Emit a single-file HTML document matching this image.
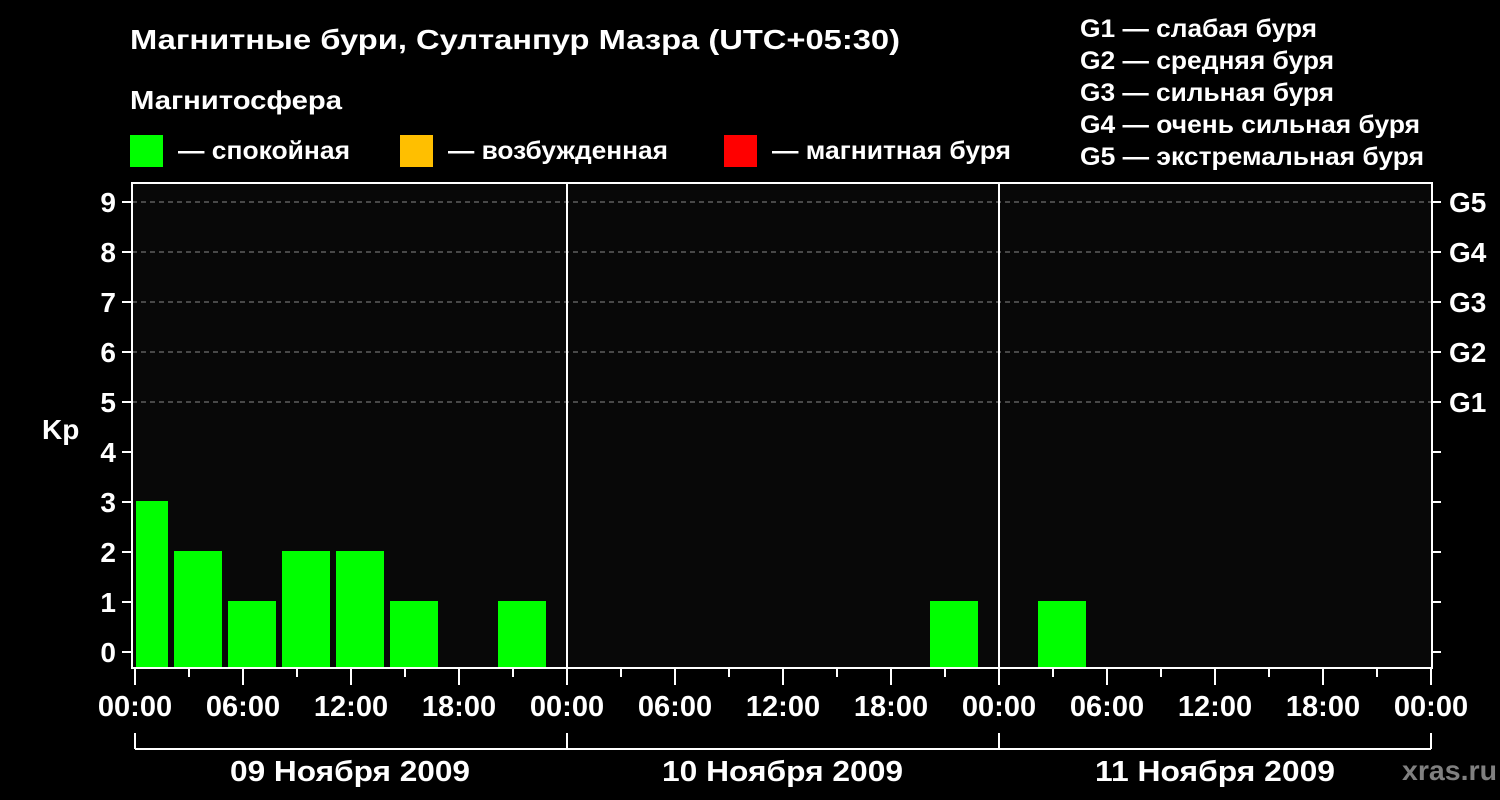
<!DOCTYPE html>
<html><head><meta charset="utf-8"><style>
html,body{margin:0;padding:0;background:#000;width:1500px;height:800px;overflow:hidden}
svg{display:block}
text{font-family:"Liberation Sans",Arial,sans-serif;font-weight:bold;fill:#fff}
</style></head><body>
<svg width="1500" height="800" viewBox="0 0 1500 800" xmlns="http://www.w3.org/2000/svg">
<rect width="1500" height="800" fill="#000"/>
<rect x="132" y="183" width="1300" height="485" fill="#080808"/>
<text x="130" y="49" font-size="28" textLength="770" lengthAdjust="spacingAndGlyphs">Магнитные бури, Султанпур Мазра (UTC+05:30)</text>
<text x="130" y="109" font-size="26" textLength="212" lengthAdjust="spacingAndGlyphs">Магнитосфера</text>
<rect x="130" y="135" width="33" height="32" fill="#00ff00"/>
<text x="178" y="159" font-size="25" textLength="172" lengthAdjust="spacingAndGlyphs">— спокойная</text>
<rect x="400" y="135" width="33" height="32" fill="#ffbf00"/>
<text x="448" y="159" font-size="25" textLength="220" lengthAdjust="spacingAndGlyphs">— возбужденная</text>
<rect x="724" y="135" width="33" height="32" fill="#ff0000"/>
<text x="772" y="159" font-size="25" textLength="239" lengthAdjust="spacingAndGlyphs">— магнитная буря</text>
<g font-size="25">
<text x="1080" y="37" textLength="237" lengthAdjust="spacingAndGlyphs">G1 — слабая буря</text>
<text x="1080" y="69" textLength="254" lengthAdjust="spacingAndGlyphs">G2 — средняя буря</text>
<text x="1080" y="101" textLength="254" lengthAdjust="spacingAndGlyphs">G3 — сильная буря</text>
<text x="1080" y="133" textLength="340" lengthAdjust="spacingAndGlyphs">G4 — очень сильная буря</text>
<text x="1080" y="165" textLength="344" lengthAdjust="spacingAndGlyphs">G5 — экстремальная буря</text>
</g>
<g stroke="#888" stroke-width="1" stroke-dasharray="5,4">
<line x1="132" y1="202" x2="1432" y2="202"/>
<line x1="132" y1="252" x2="1432" y2="252"/>
<line x1="132" y1="302" x2="1432" y2="302"/>
<line x1="132" y1="352" x2="1432" y2="352"/>
<line x1="132" y1="402" x2="1432" y2="402"/>
</g>
<g fill="#00ff00">
<rect x="136" y="501" width="32" height="167"/>
<rect x="174" y="551" width="48" height="117"/>
<rect x="228" y="601" width="48" height="67"/>
<rect x="282" y="551" width="48" height="117"/>
<rect x="336" y="551" width="48" height="117"/>
<rect x="390" y="601" width="48" height="67"/>
<rect x="498" y="601" width="48" height="67"/>
<rect x="930" y="601" width="48" height="67"/>
<rect x="1038" y="601" width="48" height="67"/>
</g>
<g stroke="#fff" stroke-width="2" fill="none">
<rect x="132" y="183" width="1300" height="485"/>
<line x1="567" y1="183" x2="567" y2="668"/>
<line x1="999" y1="183" x2="999" y2="668"/>
<path d="M122 202h10M122 252h10M122 302h10M122 352h10M122 402h10M122 452h10M122 502h10M122 552h10M122 602h10M122 652h10"/>
<path d="M1432 202h9M1432 252h9M1432 302h9M1432 352h9M1432 402h9M1432 452h9M1432 502h9M1432 552h9M1432 602h9M1432 652h9"/>
<path d="M135 668v17M189 668v9M243 668v17M297 668v9M351 668v17M405 668v9M459 668v17M513 668v9M567 668v17M621 668v9M675 668v17M729 668v9M783 668v17M837 668v9M891 668v17M945 668v9M999 668v17M1053 668v9M1107 668v17M1161 668v9M1215 668v17M1269 668v9M1323 668v17M1377 668v9M1431 668v17"/>
<path d="M135 733v16M567 733v16M999 733v16M1431 733v16M135 749H1431"/>
</g>
<g font-size="28" text-anchor="end">
<text x="116" y="212">9</text><text x="116" y="262">8</text><text x="116" y="312">7</text>
<text x="116" y="362">6</text><text x="116" y="412">5</text><text x="116" y="462">4</text>
<text x="116" y="512">3</text><text x="116" y="562">2</text><text x="116" y="612">1</text>
<text x="116" y="662">0</text>
</g>
<text x="42" y="439" font-size="28">Kp</text>
<g font-size="28">
<text x="1449" y="212">G5</text><text x="1449" y="262">G4</text><text x="1449" y="312">G3</text>
<text x="1449" y="362">G2</text><text x="1449" y="412">G1</text>
</g>
<g font-size="29" text-anchor="middle">
<text x="135" y="716">00:00</text><text x="243" y="716">06:00</text><text x="351" y="716">12:00</text><text x="459" y="716">18:00</text>
<text x="567" y="716">00:00</text><text x="675" y="716">06:00</text><text x="783" y="716">12:00</text><text x="891" y="716">18:00</text>
<text x="999" y="716">00:00</text><text x="1107" y="716">06:00</text><text x="1215" y="716">12:00</text><text x="1323" y="716">18:00</text>
<text x="1431" y="716">00:00</text>
</g>
<g font-size="29">
<text x="230" y="781" textLength="240" lengthAdjust="spacingAndGlyphs">09 Ноября 2009</text>
<text x="662" y="781" textLength="241" lengthAdjust="spacingAndGlyphs">10 Ноября 2009</text>
<text x="1095" y="781" textLength="240" lengthAdjust="spacingAndGlyphs">11 Ноября 2009</text>
</g>
<text x="1402" y="780" font-size="28" textLength="95" lengthAdjust="spacingAndGlyphs" style="fill:#808080">xras.ru</text>
</svg>
</body></html>
